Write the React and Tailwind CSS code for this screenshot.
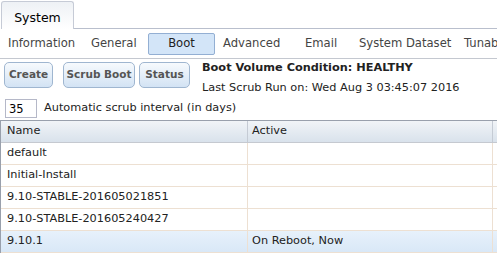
import React from 'react'

const subTabs = [
  { label: 'Information', w: 'w-[83px]' },
  { label: 'General', w: 'w-[57px]' },
  { label: 'Boot', boxed: true },
  { label: 'Advanced', w: 'w-[82px]' },
  { label: 'Email', w: 'w-[54px]' },
  { label: 'System Dataset', w: 'w-[105px]' },
  { label: 'Tunables', w: 'w-[80px]' },
]

const rows = [
  { name: 'default', active: '' },
  { name: 'Initial-Install', active: '' },
  { name: '9.10-STABLE-201605021851', active: '' },
  { name: '9.10-STABLE-201605240427', active: '' },
  { name: '9.10.1', active: 'On Reboot, Now', selected: true },
]

const font = { fontFamily: '"DejaVu Sans", Verdana, sans-serif' }

function ActionButton({ children, w }) {
  return (
    <button className={`${w} shrink-0 h-[26px] whitespace-nowrap rounded-[5px] border border-[#9fb6d0] bg-gradient-to-b from-[#f7fafd] to-[#d3e3f4] text-[10.5px] font-bold text-[#555]`} style={font}>
      {children}
    </button>
  )
}

export default function App() {
  return (
    <div className="w-[497px] h-[256px] overflow-hidden bg-white text-[11.3px] text-[#222]" style={font}>
      {/* Top tab strip */}
      <div className="flex h-[29px] items-end">
        <div className="w-[73px] h-[28px] ml-px shrink-0 border border-b-0 border-[#c6cbd6] rounded-t-[3px] bg-gradient-to-b from-[#eef1f5] to-white flex items-center justify-center pt-[5px] text-[12.5px] text-black">
          System
        </div>
        <div className="flex-1 border-b border-[#b9bfcd]" />
      </div>

      {/* Sub tabs */}
      <div className="flex items-center h-[30px] pl-[8px] border-b border-[#c4c8d0] whitespace-nowrap text-[#444] text-[11.6px]">
        {subTabs.map((t) =>
          t.boxed ? (
            <div key={t.label} className="shrink-0 mr-[8px] w-[67px] h-[22px] flex items-center justify-center rounded-[2px] border border-[#93afd3] bg-[#d3e5f8] text-[#222]">
              {t.label}
            </div>
          ) : (
            <div key={t.label} className={`${t.w} shrink-0`}>
              {t.label}
            </div>
          )
        )}
      </div>

      {/* Actions + status */}
      <div className="flex items-start pt-[3px] pl-[4px] h-[38px] whitespace-nowrap">
        <ActionButton w="w-[49px]">Create</ActionButton>
        <div className="ml-[10px] flex gap-[4px] shrink-0">
          <ActionButton w="w-[72px]">Scrub Boot</ActionButton>
          <ActionButton w="w-[51px]">Status</ActionButton>
        </div>
        <div className="ml-[12px] -mt-[2px] shrink-0">
          <div className="font-bold leading-[16px]">Boot Volume Condition: HEALTHY</div>
          <div className="leading-[16px] mt-[4px]">Last Scrub Run on: Wed Aug 3 03:45:07 2016</div>
        </div>
        <div className="ml-[76px] -mt-[2px] shrink-0">
          <div className="font-bold leading-[16px]">S</div>
          <div className="font-bold leading-[16px] mt-[4px]">U</div>
        </div>
      </div>

      {/* Scrub interval */}
      <div className="flex items-center h-[23px] pl-[5px]">
        <input
          readOnly
          value="35"
          className="w-[32px] h-[19px] border border-[#b5b8c8] px-[3px] text-[11.5px] text-black outline-none"
          style={font}
        />
        <span className="ml-[7px]">Automatic scrub interval (in days)</span>
      </div>

      {/* Grid */}
      <div className="border-l border-t border-[#99a0ac]">
        <div className="flex h-[22px] bg-gradient-to-b from-[#f1f4f7] to-[#d9e2ec] border-b border-[#c5c9d0]">
          <div className="w-[247px] pl-[6px] flex items-center border-r border-[#c5cbd4]">Name</div>
          <div className="w-[245px] pl-[4px] flex items-center border-r border-[#c5cbd4]">Active</div>
          <div className="flex-1" />
        </div>
        {rows.map((r) => (
          <div
            key={r.name}
            className={`flex h-[22px] border-b border-[#ede0d2] ${r.selected ? 'bg-gradient-to-b from-[#e7f1fb] to-[#d9e8f7]' : 'bg-white'}`}
          >
            <div className="w-[247px] pl-[6px] flex items-center border-r border-[#ede0d2]">{r.name}</div>
            <div className="w-[245px] pl-[4px] flex items-center border-r border-[#ede0d2]">{r.active}</div>
            <div className="flex-1" />
          </div>
        ))}
      </div>
    </div>
  )
}
